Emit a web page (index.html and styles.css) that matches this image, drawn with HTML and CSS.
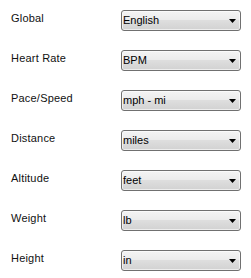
FILE: index.html
```html
<!DOCTYPE html>
<html>
<head>
<meta charset="utf-8">
<link rel="stylesheet" href="styles.css">
</head>
<body>
<div class="settings">
  <div class="row"><div class="label">Global</div><div class="combo"><span class="value">English</span><svg class="arrow" width="7" height="4" viewBox="0 0 7 4"><path d="M0 0H7L3.5 4Z" fill="#000"/></svg></div></div>
  <div class="row"><div class="label">Heart Rate</div><div class="combo"><span class="value">BPM</span><svg class="arrow" width="7" height="4" viewBox="0 0 7 4"><path d="M0 0H7L3.5 4Z" fill="#000"/></svg></div></div>
  <div class="row"><div class="label">Pace/Speed</div><div class="combo"><span class="value">mph - mi</span><svg class="arrow" width="7" height="4" viewBox="0 0 7 4"><path d="M0 0H7L3.5 4Z" fill="#000"/></svg></div></div>
  <div class="row"><div class="label">Distance</div><div class="combo"><span class="value">miles</span><svg class="arrow" width="7" height="4" viewBox="0 0 7 4"><path d="M0 0H7L3.5 4Z" fill="#000"/></svg></div></div>
  <div class="row"><div class="label">Altitude</div><div class="combo"><span class="value">feet</span><svg class="arrow" width="7" height="4" viewBox="0 0 7 4"><path d="M0 0H7L3.5 4Z" fill="#000"/></svg></div></div>
  <div class="row"><div class="label">Weight</div><div class="combo"><span class="value">lb</span><svg class="arrow" width="7" height="4" viewBox="0 0 7 4"><path d="M0 0H7L3.5 4Z" fill="#000"/></svg></div></div>
  <div class="row"><div class="label">Height</div><div class="combo"><span class="value">in</span><svg class="arrow" width="7" height="4" viewBox="0 0 7 4"><path d="M0 0H7L3.5 4Z" fill="#000"/></svg></div></div>
</div>
</body>
</html>
```
FILE: styles.css
```css
html, body {
  margin: 0;
  padding: 0;
  background: #ffffff;
}
.settings {
  padding-top: 10px;
  display: flex;
  flex-direction: column;
  font-family: "Liberation Sans", Arial, sans-serif;
  font-size: 11px;
  color: #000;
}
.row {
  display: flex;
  align-items: flex-start;
  height: 40px;
}
.label {
  width: 110px;
  padding-left: 11px;
  line-height: 14px;
  padding-top: 1px;
  letter-spacing: 0.2px;
  color: #111;
}
.combo {
  box-sizing: border-box;
  width: 120px;
  height: 21px;
  border: 1px solid #707070;
  border-radius: 3px;
  background: linear-gradient(to bottom, #f4f4f4 0%, #ececec 45%, #dedede 50%, #d2d2d2 100%);
  box-shadow: inset 0 0 0 1px rgba(255,255,255,0.6);
  display: flex;
  align-items: center;
  justify-content: space-between;
  padding: 0 4px 0 1px;
}
.value {
  line-height: 13px;
}
.arrow {
  display: block;
}
```
